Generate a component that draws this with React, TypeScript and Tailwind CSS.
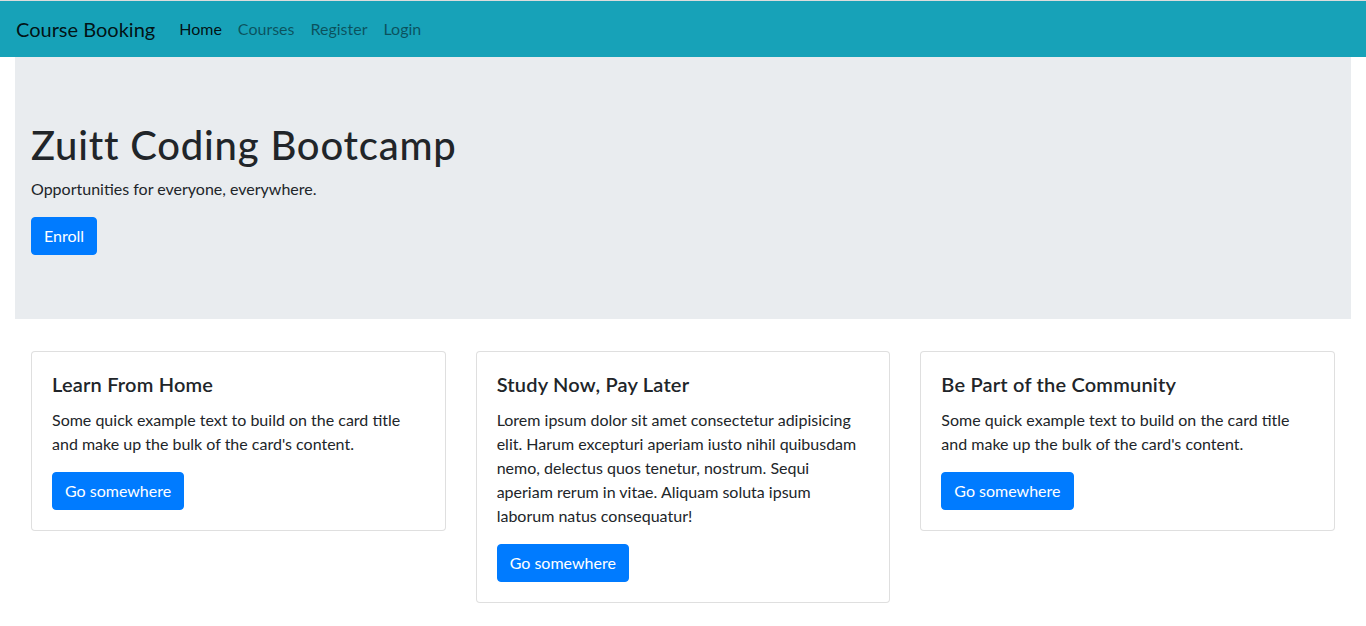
const cards = [
  {
    title: "Learn From Home",
    text: "Some quick example text to build on the card title and make up the bulk of the card's content.",
  },
  {
    title: "Study Now, Pay Later",
    text: "Lorem ipsum dolor sit amet consectetur adipisicing elit. Harum excepturi aperiam iusto nihil quibusdam nemo, delectus quos tenetur, nostrum. Sequi aperiam rerum in vitae. Aliquam soluta ipsum laborum natus consequatur!",
  },
  {
    title: "Be Part of the Community",
    text: "Some quick example text to build on the card title and make up the bulk of the card's content.",
  },
];

function NavBar() {
  return (
    <nav className="h-[57px] border-t border-[#dcdcdc] bg-[#17a2b8] flex items-center px-4">
      <a className="text-[20px] leading-[30px] py-[5px] mr-4 text-black/90">Course Booking</a>
      <div className="flex items-center text-[16px] leading-6">
        <a className="px-2 py-2 text-black/90">Home</a>
        <a className="px-2 py-2 text-black/50">Courses</a>
        <a className="px-2 py-2 text-black/50">Register</a>
        <a className="px-2 py-2 text-black/50">Login</a>
      </div>
    </nav>
  );
}

function Card({ title, text }: { title: string; text: string }) {
  return (
    <div className="border border-black/[0.125] rounded-[4px] bg-white p-5">
      <h5 className="text-[20px] leading-6 font-semibold tracking-[0.2px] mb-3">{title}</h5>
      <p className="text-[16px] leading-6 mb-4">{text}</p>
      <button className="bg-[#007bff] text-white text-[16px] leading-6 px-3 py-[6px] border border-[#007bff] rounded-[4px]">
        Go somewhere
      </button>
    </div>
  );
}

export default function App() {
  return (
    <div className="min-h-screen bg-white text-[#212529] font-['Lato',sans-serif]">
      <NavBar />
      <div className="px-[15px]">
        {/* jumbotron */}
        <div className="bg-[#e9ecef] px-4 py-16">
          <h1 className="text-[40px] leading-[48px] font-medium tracking-[0.8px] mb-2">Zuitt Coding Bootcamp</h1>
          <p className="text-[16px] leading-6 mb-4">Opportunities for everyone, everywhere.</p>
          <button className="bg-[#007bff] text-white text-[16px] leading-6 px-3 py-[6px] border border-[#007bff] rounded-[4px]">
            Enroll
          </button>
        </div>
        <div className="grid grid-cols-3 gap-[30px] items-start px-4 mt-8">
          {cards.map((c) => (
            <Card key={c.title} title={c.title} text={c.text} />
          ))}
        </div>
      </div>
    </div>
  );
}
